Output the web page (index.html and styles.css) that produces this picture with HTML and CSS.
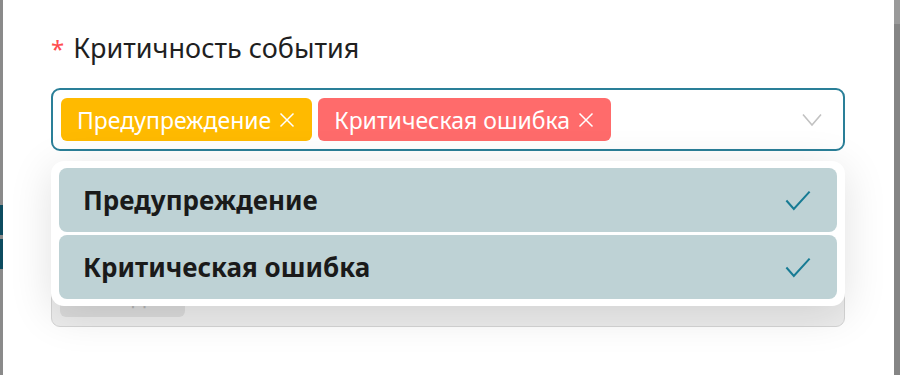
FILE: index.html
```html
<!DOCTYPE html>
<html lang="ru">
<head>
    <meta charset="UTF-8">
    <title>Критичность события</title>
    <link rel="stylesheet" href="styles.css">
</head>
<body>

    <div class="side-left">
        <div class="side-block"></div>
        <div class="side-block"></div>
    </div>

    <div class="modal">
        <div class="form-item">
            <label class="form-label"><span class="required">*</span>Критичность события</label>
            <div class="select-box">
                <div class="tags">
                    <span class="tag tag-warning">Предупреждение
                        <svg class="tag-close" viewBox="0 0 16 16"><path d="M1.5 1.5 L14.5 14.5 M14.5 1.5 L1.5 14.5"/></svg>
                    </span>
                    <span class="tag tag-error">Критическая ошибка
                        <svg class="tag-close" viewBox="0 0 16 16"><path d="M1.5 1.5 L14.5 14.5 M14.5 1.5 L1.5 14.5"/></svg>
                    </span>
                </div>
                <svg class="chevron" viewBox="0 0 20 14"><path d="M1 1.5 L10 12 L19 1.5"/></svg>
            </div>

            <div class="dropdown">
                <div class="option">
                    <span>Предупреждение</span>
                    <svg class="check" viewBox="0 0 28 22"><path d="M1.5 11 L9.5 20 L26.5 1.5"/></svg>
                </div>
                <div class="option">
                    <span>Критическая ошибка</span>
                    <svg class="check" viewBox="0 0 28 22"><path d="M1.5 11 L9.5 20 L26.5 1.5"/></svg>
                </div>
            </div>
        </div>

        <div class="form-item next-field">
            <div class="select-box disabled">
                <div class="tags">
                    <span class="tag tag-muted">Не задан</span>
                </div>
            </div>
        </div>
    </div>

    <div class="side-right"></div>

</body>
</html>
```

FILE: styles.css
```css
body {
    margin: 0;
    height: 375px;
    overflow: hidden;
    display: flex;
    background-color: #8a8a8a;
    font-family: 'Noto Sans', 'Open Sans', sans-serif;
    color: #1f1f1f;
}
.side-left {
    width: 3px;
    display: flex;
    flex-direction: column;
    padding-top: 205px;
    gap: 4px;
}
.side-block {
    height: 30px;
    background-color: #0d4b5f;
}
.side-right {
    width: 6px;
    background: linear-gradient(#9a9a9a 0, #9a9a9a 24px, #858585 24px);
}
.modal {
    flex: 1;
    background-color: #fff;
    padding: 30px 49px 0 48px;
}
.form-item {
    position: relative;
}
.next-field {
    margin-top: 113px;
}
.form-label {
    display: block;
    font-size: 27px;
    line-height: 36px;
    margin-bottom: 21px;
}
.required {
    color: #ff4d4f;
    font-size: 24px;
    margin-right: 9px;
}
.select-box {
    height: 63px;
    box-sizing: border-box;
    border: 2px solid #2a7f98;
    border-radius: 9px;
    padding: 0 8px;
    display: flex;
    align-items: center;
    justify-content: space-between;
    background-color: #fff;
}
.tags {
    display: flex;
    gap: 6px;
}
.tag {
    height: 43px;
    box-sizing: border-box;
    padding: 0 17px 0 16px;
    border-radius: 6px;
    color: #fff;
    font-size: 23px;
    display: flex;
    align-items: center;
    gap: 8px;
}
.tag-warning {
    background-color: #ffba00;
}
.tag-error {
    background-color: #ff6b6b;
}
.tag-close {
    width: 16px;
    height: 16px;
    fill: none;
    stroke: #fff;
    stroke-width: 1.5;
}
.chevron {
    width: 20px;
    height: 14px;
    margin-right: 13px;
    fill: none;
    stroke: #c2c2c2;
    stroke-width: 1.6;
}
.dropdown {
    position: absolute;
    top: 131px;
    left: 0;
    right: 0;
    background-color: #fff;
    border-radius: 13px;
    padding: 7px 8px;
    display: flex;
    flex-direction: column;
    gap: 3px;
    box-shadow: 0 8px 44px rgba(0, 0, 0, 0.12);
    z-index: 2;
}
.option {
    height: 64px;
    background-color: #bed2d5;
    border-radius: 8px;
    padding: 0 26px 0 24px;
    display: flex;
    align-items: center;
    justify-content: space-between;
    font-size: 26px;
    font-weight: 700;
    color: #1a1a1a;
}
.check {
    width: 26px;
    height: 21px;
    fill: none;
    stroke: #177b94;
    stroke-width: 2.2;
}
.select-box.disabled {
    border: 1px solid #d4d4d4;
    background-color: #ececec;
}
.tag-muted {
    background-color: #dadada;
    color: #b3b3b3;
    padding: 0 12px;
}
```
